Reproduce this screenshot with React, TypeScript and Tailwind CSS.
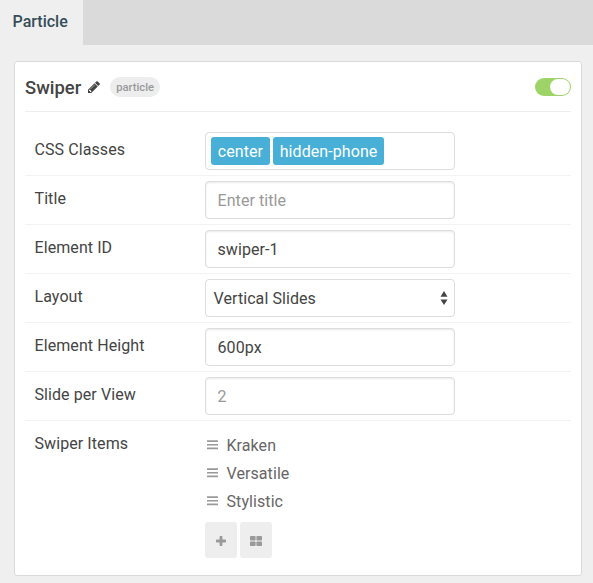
import type { ReactNode } from "react";

function PencilIcon() {
  return (
    <svg viewBox="0 0 1792 1792" className="h-[14px] w-[14px] fill-current">
      <path d="M491 1536l91-91-235-235-91 91v107h128v128h107zm523-928q0-22-22-22-10 0-17 7l-542 542q-7 7-7 17 0 22 22 22 10 0 17-7l542-542q7-7 7-17zm-54-192l416 416-832 832h-416v-416zm683 96q0 53-37 90l-166 166-416-416 166-165q36-38 90-38 53 0 91 38l235 234q37 39 37 91z" />
    </svg>
  );
}

function DragIcon() {
  return (
    <svg viewBox="0 0 11 10" className="mb-px h-[10px] w-[11px] fill-[#999]">
      <rect x="0" y="0.2" width="11" height="1.7" rx="0.3" />
      <rect x="0" y="3.9" width="11" height="1.7" rx="0.3" />
      <rect x="0" y="7.6" width="11" height="1.7" rx="0.3" />
    </svg>
  );
}

function PlusIcon() {
  return (
    <svg viewBox="0 0 10 10" className="h-[10px] w-[10px] fill-current">
      <rect x="3.6" y="0" width="2.8" height="10" rx="0.7" />
      <rect x="0" y="3.6" width="10" height="2.8" rx="0.7" />
    </svg>
  );
}

function GridIcon() {
  return (
    <svg viewBox="0 0 12 10" className="h-[10px] w-[12px] fill-current">
      <rect x="0" y="0" width="5.6" height="4.6" rx="0.8" />
      <rect x="6.4" y="0" width="5.6" height="4.6" rx="0.8" />
      <rect x="0" y="5.4" width="5.6" height="4.6" rx="0.8" />
      <rect x="6.4" y="5.4" width="5.6" height="4.6" rx="0.8" />
    </svg>
  );
}

function Row({ label, children }: { label: string; children: ReactNode }) {
  return (
    <div className="flex h-[49px] border-b border-[#f3f3f3] pt-[5px] pl-[9.5px]">
      <div className="w-[170.5px] pt-[6px] leading-6">{label}</div>
      {children}
    </div>
  );
}

const field =
  "h-[38px] w-[250px] rounded-[4px] border border-[#dddddd] bg-white text-[#444] placeholder:text-[#999] outline-none";

function TextField({ value, placeholder }: { value?: string; placeholder?: string }) {
  return (
    <input
      className={`${field} px-[11.5px] shadow-[inset_0_1px_2px_rgba(0,0,0,0.09)]`}
      defaultValue={value}
      placeholder={placeholder}
    />
  );
}

export default function App() {
  return (
    <div className="h-[583px] w-[593px] overflow-hidden bg-[#efefef] font-['Roboto',sans-serif] text-base tracking-[0.08px] text-[#444]">
      <div className="flex h-[45px] bg-[#dadada]">
        <div className="w-[83px] bg-[#efefef] pt-[10px] pl-[12.5px] font-medium leading-6 tracking-normal text-[#354d59]">Particle</div>
      </div>

      <div className="mt-4 ml-[14px] h-[515px] w-[568px] rounded-[3px] border border-[#dadada] bg-white px-[10px]">
        <div className="flex h-[50px] items-center border-b border-[#eeeeee]">
          <h4 className="pt-[2px] text-[18.4px] font-medium leading-6 tracking-normal">Swiper</h4>
          <span className="ml-[6px] pt-px">
            <PencilIcon />
          </span>
          <span className="ml-[9px] h-5 rounded-full bg-[#ededed] px-[6px] pt-px text-[11.2px] font-medium leading-5 tracking-normal text-[#999]">
            particle
          </span>
          <span className="ml-auto flex h-[18px] w-9 items-center justify-end rounded-full bg-[#9dd367] pr-px">
            <span className="h-4 w-5 rounded-full bg-white" />
          </span>
        </div>

        <div className="pt-[15px]">
          <Row label="CSS Classes">
            <div className={`${field} flex gap-[3px] p-[4px_5px]`}>
              <span className="h-7 rounded-[3px] bg-[#48b0d7] px-[6.8px] pt-px leading-7 text-white">center</span>
              <span className="h-7 rounded-[3px] bg-[#48b0d7] px-[6.8px] pt-px leading-7 text-white">hidden-phone</span>
            </div>
          </Row>
          <Row label="Title">
            <TextField placeholder="Enter title" />
          </Row>
          <Row label="Element ID">
            <TextField value="swiper-1" />
          </Row>
          <Row label="Layout">
            <div className={`${field} flex items-center justify-between pr-[6px] pl-[7.5px]`}>
              <span className="pt-[2px]">Vertical Slides</span>
              <svg viewBox="0 0 8 14" className="h-[14px] w-2 fill-[#444]">
                <path d="M4 0L7.5 5.7H.5zM4 14L.5 8.5h7z" />
              </svg>
            </div>
          </Row>
          <Row label="Element Height">
            <TextField value="600px" />
          </Row>
          <Row label="Slide per View">
            <TextField placeholder="2" />
          </Row>

          <div className="flex pt-[5px] pl-[9.5px]">
            <div className="w-[170.5px] pt-[6px] leading-6">Swiper Items</div>
            <div>
              <ul className="pt-[5px] text-[#666]">
                {["Kraken", "Versatile", "Stylistic"].map((item) => (
                  <li key={item} className="flex h-7 items-center pl-[2px]">
                    <DragIcon />
                    <span className="ml-[8.5px] pt-px leading-6">{item}</span>
                  </li>
                ))}
              </ul>
              <div className="mt-[7px] flex gap-[3px] text-[#999]">
                <button className="flex h-9 w-8 items-center justify-center rounded-[3px] bg-[#eeeeee] pt-[2px] pr-px">
                  <PlusIcon />
                </button>
                <button className="flex h-9 w-8 items-center justify-center rounded-[3px] bg-[#eeeeee] pt-[2px]">
                  <GridIcon />
                </button>
              </div>
            </div>
          </div>
        </div>
      </div>
    </div>
  );
}
